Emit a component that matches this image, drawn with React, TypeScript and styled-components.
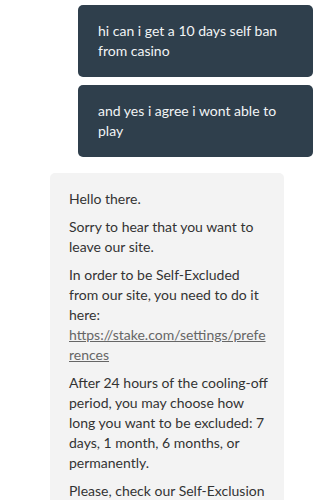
import React from "react";
import styled, { createGlobalStyle } from "styled-components";

const Global = createGlobalStyle`
  html, body { margin: 0; padding: 0; background: #ffffff; }
  body { font-family: "Lato", "Open Sans", sans-serif; }
`;

const Page = styled.div`
  width: 335px;
  height: 500px;
  overflow: hidden;
  display: flex;
  flex-direction: column;
  padding-top: 5px;
  box-sizing: border-box;
`;

const UserRow = styled.div`
  display: flex;
  justify-content: flex-end;
  padding-right: 22px;
  margin-bottom: 8px;
`;

const UserBubble = styled.div`
  width: 235px;
  box-sizing: border-box;
  background: #2f3f4c;
  color: #f2f4f5;
  border-radius: 5px;
  padding: 16px 20px;
  font-size: 14px;
  line-height: 20px;
`;

const BotRow = styled.div`
  display: flex;
  justify-content: flex-start;
  padding-left: 50px;
  margin-top: 8px;
`;

const BotBubble = styled.div`
  width: 234px;
  box-sizing: border-box;
  background: #f3f3f3;
  color: #333333;
  border-radius: 5px;
  padding: 16px 14px 16px 19px;
  font-size: 14px;
  line-height: 20px;
`;

const Para = styled.p`
  margin: 0 0 8px 0;
`;

const Link = styled.a`
  color: #666666;
  text-decoration: underline;
  overflow-wrap: anywhere;
`;

export default function App() {
  return (
    <>
      <Global />
      <Page>
        <UserRow>
          <UserBubble>hi can i get a 10 days self ban from casino</UserBubble>
        </UserRow>
        <UserRow>
          <UserBubble>and yes i agree i wont able to play</UserBubble>
        </UserRow>
        <BotRow>
          <BotBubble>
            <Para>Hello there.</Para>
            <Para>Sorry to hear that you want to leave our site.</Para>
            <Para>
              In order to be Self-Excluded from our site, you need to do it here:{" "}
              <Link href="#">https://stake.com/settings/preferences</Link>
            </Para>
            <Para>
              After 24 hours of the cooling-off period, you may choose how long you want to be
              excluded: 7 days, 1 month, 6 months, or permanently.
            </Para>
            <Para>Please, check our Self-Exclusion page for more information.</Para>
          </BotBubble>
        </BotRow>
      </Page>
    </>
  );
}
